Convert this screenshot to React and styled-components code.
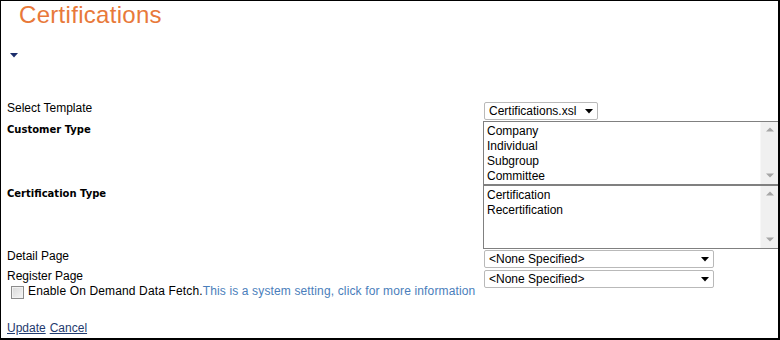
import React from 'react';
import styled, { createGlobalStyle } from 'styled-components';

const GlobalStyle = createGlobalStyle`
  html, body {
    margin: 0;
    padding: 0;
    background: #fff;
  }
  body {
    font-family: "Liberation Sans", Arial, sans-serif;
    font-size: 12px;
    color: #000;
  }
`;

const customerTypes = ['Company', 'Individual', 'Subgroup', 'Committee'];
const certificationTypes = ['Certification', 'Recertification'];

const Page = styled.div`
    box-sizing: border-box;
    width: 780px;
    height: 340px;
    overflow: hidden;
    border-top: 1px solid #000;
    border-left: 1px solid #000;
    border-right: 2px solid #000;
    border-bottom: 2px solid #000;
    padding-left: 6px;
`

const Title = styled.h1`
    margin: 0 0 0 12px;
    font-family: "Liberation Sans", Arial, sans-serif;
    font-weight: normal;
    font-size: 24px;
    letter-spacing: 0.3px;
    line-height: 28px;
    color: #e8793a;
`

const Toggle = styled.div`
    display: flex;
    margin: 24px 0 0 3px;
    height: 5px;
`

const Form = styled.div`
    display: grid;
    grid-template-columns: 476px 1fr;
    align-items: start;
    margin-top: 43px;
`

const Label = styled.div`
    line-height: 15px;
    padding-top: ${p => p.$bold ? '1px' : '0'};
    font-family: ${p => p.$bold ? '"DejaVu Sans", Verdana, sans-serif' : '"Liberation Sans", Arial, sans-serif'};
    font-size: ${p => p.$bold ? '10px' : '12px'};
    font-weight: ${p => p.$bold ? 'bold' : 'normal'};
`

const Cell = styled.div`
    display: flex;
`

const SelectBox = styled.div`
    box-sizing: border-box;
    display: flex;
    align-items: center;
    justify-content: space-between;
    width: ${p => p.$width}px;
    height: 18px;
    margin: 1px 0 1px 1px;
    padding: 0 4px;
    border: 1px solid #b9b9b9;
    border-radius: 2px;
    background: #fff;
    svg { margin-top: 1px; }
`

const ListFrame = styled.div`
    box-sizing: border-box;
    display: flex;
    width: 100%;
    height: 64px;
    border: 1px solid #808080;
    border-right: none;
    background: #fff;
`

const Options = styled.ul`
    flex: 1;
    margin: 0;
    padding: 2px 0 0 3px;
    list-style: none;
    li {
        line-height: 15px;
    }
`

const ScrollTrack = styled.div`
    display: flex;
    flex-direction: column;
    justify-content: space-between;
    align-items: center;
    width: 17px;
    padding: 5px 0 6px;
    background: #f0f0f0;
    border-left: 1px solid #f7f7f7;
`

const CheckRow = styled.div`
    display: flex;
    align-items: center;
    height: 15px;
    padding-left: 4px;
    font-family: "Liberation Sans", Arial, sans-serif;
    font-size: 12px;
    letter-spacing: 0.14px;
    white-space: nowrap;
`

const CheckBox = styled.span`
    box-sizing: border-box;
    flex: none;
    width: 13px;
    height: 13px;
    margin: 2px 4px 0 0;
    border: 1px solid #8c8c8c;
    background: linear-gradient(135deg, #d8d8d8, #f6f6f6);
    box-shadow: inset 0 0 0 1px #f2f2f2;
`

const InfoLink = styled.span`
    color: #4a7ebb;
    cursor: pointer;
`

const Actions = styled.div`
    display: flex;
    gap: 4px;
    margin-top: 22px;
    line-height: 15px;
    a {
        color: #1f3a6e;
        text-decoration: underline;
    }
`

const Arrow = ({ color = '#000' }) => (
    <svg width="8" height="5" viewBox="0 0 8 5">
        <polygon points="0,0 8,0 4,4.5" fill={color}/>
    </svg>
);

const Scrollbar = () => (
    <ScrollTrack>
        <svg width="8" height="5" viewBox="0 0 8 5"><polygon points="0,4.5 8,4.5 4,0.5" fill="#a6a6a6"/></svg>
        <svg width="8" height="5" viewBox="0 0 8 5"><polygon points="0,0.5 8,0.5 4,4.5" fill="#a6a6a6"/></svg>
    </ScrollTrack>
);

const Dropdown = ({ value, width }) => (
    <SelectBox $width={width}>
        <span>{value}</span>
        <Arrow/>
    </SelectBox>
);

const ListBox = ({ items }) => (
    <ListFrame>
        <Options>
            {items.map(item => <li key={item}>{item}</li>)}
        </Options>
        <Scrollbar/>
    </ListFrame>
);

const App = () => {
    return (<>
        <GlobalStyle/>
        <Page>
            <Title>Certifications</Title>
            <Toggle>
                <Arrow color="#1b2d6b"/>
            </Toggle>
            <Form>
                <Label>Select Template</Label>
                <Cell>
                    <Dropdown value="Certifications.xsl" width={114}/>
                </Cell>

                <Label $bold>Customer Type</Label>
                <Cell>
                    <ListBox items={customerTypes}/>
                </Cell>

                <Label $bold>Certification Type</Label>
                <Cell>
                    <ListBox items={certificationTypes}/>
                </Cell>

                <Label>Detail Page</Label>
                <Cell>
                    <Dropdown value="<None Specified>" width={230}/>
                </Cell>

                <Label>
                    Register Page
                    <CheckRow>
                        <CheckBox/>
                        <span>Enable On Demand Data Fetch.</span>
                        <InfoLink>This is a system setting, click for more information</InfoLink>
                    </CheckRow>
                </Label>
                <Cell>
                    <Dropdown value="<None Specified>" width={230}/>
                </Cell>
            </Form>
            <Actions>
                <a href="#update">Update</a>
                <a href="#cancel">Cancel</a>
            </Actions>
        </Page>
    </>);
};

export default App;
